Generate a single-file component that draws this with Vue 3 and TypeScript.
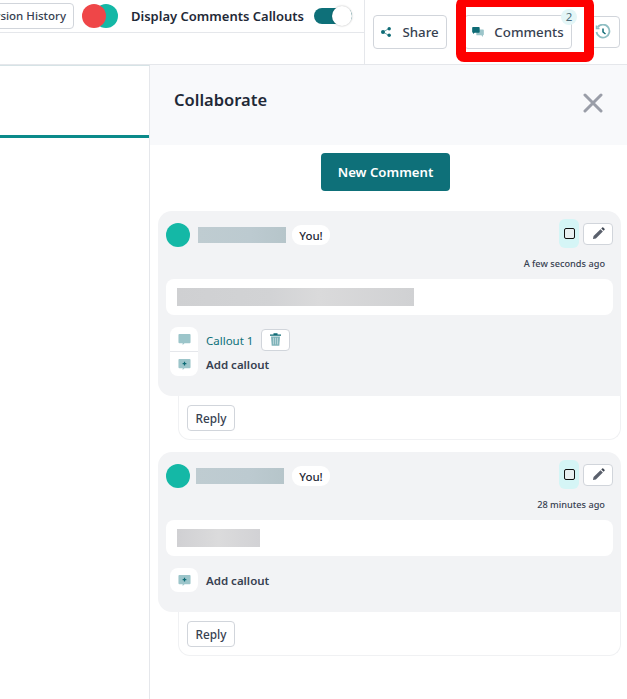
<script setup lang="ts">
interface CommentItem {
  id: number
  nameWidth: number
  nameGap: number
  youGap: number
  time: string
  textWidth: number
  textGradient: string
  callouts: string[]
}

const comments: CommentItem[] = [
  {
    id: 1,
    nameWidth: 88,
    nameGap: 8,
    youGap: 6,
    time: 'A few seconds ago',
    textWidth: 237,
    textGradient: 'linear-gradient(90deg,#cfd0d2,#d2d3d5 40%,#dadadb 60%,#d0d1d3)',
    callouts: ['Callout 1'],
  },
  {
    id: 2,
    nameWidth: 88,
    nameGap: 6,
    youGap: 8,
    time: '28 minutes ago',
    textWidth: 83,
    textGradient: 'linear-gradient(90deg,#d0d0d3,#dbdbdc 50%,#d2d2d5)',
    callouts: [],
  },
]
</script>

<template>
  <div class="page">
    <header class="topbar">
      <div class="top-left">
        <div class="top-row">
          <button class="btn version">Version History</button>
          <div class="avatars">
            <span class="dot teal"></span>
            <span class="dot red"></span>
          </div>
          <span class="toggle-label">Display Comments Callouts</span>
          <span class="toggle"><span class="knob"></span></span>
        </div>
      </div>
      <div class="top-right">
        <button class="btn action share">
          <svg width="10" height="10" viewBox="0 0 10 10">
            <path d="M2 5 8 1.500M2 5l6 3.500" stroke="#0e6b75" stroke-width=".6" />
            <circle cx="2" cy="5" r="2" fill="#0e6b75" />
            <circle cx="8.200" cy="1.700" r="1.700" fill="#0e6b75" />
            <circle cx="8.200" cy="8.300" r="1.700" fill="#0e6b75" />
          </svg>
          Share
        </button>
        <button class="btn action comments">
          <svg width="12" height="10" viewBox="0 0 14 12">
            <path d="M5 3h8a1 1 0 0 1 1 1v5a1 1 0 0 1-1 1v2l-2-2H5z" fill="#9cc5ca" />
            <path d="M1 0h7a1 1 0 0 1 1 1v5a1 1 0 0 1-1 1H3L1 8.500V7a1 1 0 0 1-1-1V1a1 1 0 0 1 1-1z" fill="#0e6b75" />
          </svg>
          Comments
          <span class="badge">2</span>
        </button>
        <button class="btn history">
          <svg width="16" height="16" viewBox="0 0 16 16" fill="none" stroke="#8fbec3" stroke-width="1.800">
            <path d="M2.500 3.500A6.500 6.500 0 1 1 1.500 8" />
            <path d="M1.500 1.500v3h3" stroke-width="1.500" />
            <path d="M8 4.500V8l2.500 2" stroke="#0e6b75" stroke-width="1.500" />
          </svg>
        </button>
        <div class="highlight"></div>
      </div>
    </header>

    <div class="main">
      <aside class="left-pane"><div class="tab-line"></div></aside>
      <section class="panel">
        <div class="panel-head">
          <h2>Collaborate</h2>
          <svg class="close" width="20" height="20" viewBox="0 0 20 20">
            <path d="M2 2 18 18M18 2 2 18" stroke="#9a9ea8" stroke-width="3" stroke-linecap="round" />
          </svg>
        </div>
        <div class="new-wrap"><button class="new-btn">New Comment</button></div>

        <article v-for="c in comments" :key="c.id" class="thread">
          <div class="card">
            <div class="card-head">
              <span class="avatar"></span>
              <span class="name-blur" :style="{ width: c.nameWidth + 'px', marginLeft: c.nameGap + 'px' }"></span>
              <span class="you" :style="{ marginLeft: c.youGap + 'px' }">You!</span>
              <span class="spacer"></span>
              <span class="check-chip"><span class="check"></span></span>
              <button class="btn pencil">
                <svg width="13" height="13" viewBox="0 0 14 14">
                  <path d="M1 13l.7-3.200L9.200 2.300l2.500 2.500L4.200 12.300z" fill="#5a606c" />
                  <path d="M10 1.500l1-1a.8.800 0 0 1 1.100 0l1.400 1.400a.8.800 0 0 1 0 1.100l-1 1z" fill="#3f4652" />
                </svg>
              </button>
            </div>
            <div class="time">{{ c.time }}</div>
            <div class="body-box">
              <span class="text-blur" :style="{ width: c.textWidth + 'px', background: c.textGradient }"></span>
            </div>
            <div class="callouts">
              <div v-for="label in c.callouts" :key="label" class="callout-row">
                <span class="callout-icon divided">
                  <svg width="13" height="13" viewBox="0 0 14 14">
                    <path d="M1.500 1h11a1 1 0 0 1 1 1v8a1 1 0 0 1-1 1H7l-2 2v-2H1.500a1 1 0 0 1-1-1V2a1 1 0 0 1 1-1z" fill="#9cc5ca" />
                  </svg>
                </span>
                <span class="callout-link">{{ label }}</span>
                <button class="btn trash">
                  <svg width="11" height="13" viewBox="0 0 11 13">
                    <path d="M0 1.500h11v1.200H0zM3.500.200h4v1.500h-4z" fill="#0e6b75" />
                    <path d="M1 3.400h9l-.7 9.400H1.700z" fill="#7fb3b9" />
                    <path d="M3.500 4.800v6.600M5.500 4.800v6.600M7.500 4.800v6.600" stroke="#d9e9eb" stroke-width=".6" />
                  </svg>
                </button>
              </div>
              <div class="callout-row">
                <span class="callout-icon">
                  <svg width="13" height="13" viewBox="0 0 14 14">
                    <path d="M1.500 1h11a1 1 0 0 1 1 1v8a1 1 0 0 1-1 1H7l-2 2v-2H1.500a1 1 0 0 1-1-1V2a1 1 0 0 1 1-1z" fill="#9cc5ca" />
                    <path d="M5 6h4M7 4v4" stroke="#0e6b75" stroke-width="1.300" />
                  </svg>
                </span>
                <span class="callout-add">Add callout</span>
              </div>
            </div>
          </div>
          <div class="reply-box"><button class="btn reply">Reply</button></div>
        </article>
      </section>
    </div>
  </div>
</template>

<style>
html, body { margin: 0; background: #fff; }
</style>

<style scoped>
* { box-sizing: border-box; }
.page {
  width: 627px;
  height: 699px;
  overflow: hidden;
  font-family: "Noto Sans", "Open Sans", sans-serif;
  color: #1f2937;
  display: flex;
  flex-direction: column;
}
.btn {
  font-family: inherit;
  background: #fff;
  border: 1px solid #d1d5db;
  border-radius: 4px;
  padding: 0;
  color: #374151;
  display: inline-flex;
  align-items: center;
  justify-content: center;
}
.topbar {
  height: 65px;
  flex: none;
  display: flex;
  border-bottom: 1px solid #e5e7eb;
}
.top-left {
  width: 365px;
  flex: none;
  border-right: 1px solid #e5e7eb;
}
.top-row {
  height: 33px;
  border-bottom: 1px solid #e5e7eb;
  display: flex;
  align-items: center;
  padding-bottom: 1px;
}
.version {
  flex: none;
  width: 110px;
  height: 26px;
  margin-left: -36px;
  padding-right: 7px;
  justify-content: flex-end;
  font-size: 11.500px;
  font-weight: 500;
  white-space: nowrap;
}
.avatars {
  flex: none;
  display: flex;
  margin-left: 8px;
  width: 36px;
}
.dot {
  width: 24px;
  height: 24px;
  border-radius: 50%;
  flex: none;
}
.dot.red {
  background: #ef4648;
  margin-left: -36px;
}
.dot.teal {
  background: #14b8a6;
  margin-left: 12px;
}
.toggle-label {
  flex: none;
  width: 173px;
  margin-left: 13px;
  font-size: 13px;
  font-weight: 600;
  white-space: nowrap;
  color: #1f2937;
}
.toggle {
  flex: none;
  position: relative;
  width: 38px;
  height: 16px;
  margin-left: 10px;
  background: #0e7079;
  border-radius: 8px;
}
.knob {
  position: absolute;
  right: 0;
  top: -2px;
  width: 20px;
  height: 20px;
  border-radius: 50%;
  background: #fff;
  box-shadow: 0 0 2px rgba(0, 0, 0, .3);
}
.top-right {
  flex: 1;
  position: relative;
  display: flex;
  align-items: center;
  padding: 0 6px 0 8px;
}
.action {
  height: 34px;
  font-size: 13.300px;
  font-weight: 500;
  gap: 11px;
  position: relative;
}
.share { width: 74px; }
.comments {
  width: 108px;
  margin-left: 17px;
  gap: 10px;
}
.badge {
  position: absolute;
  right: -6px;
  top: -7px;
  width: 16px;
  height: 16px;
  border-radius: 50%;
  background: #e4f6f7;
  color: #4b6a78;
  font-size: 11.500px;
  font-weight: 400;
  line-height: 16px;
  text-align: center;
}
.history {
  width: 36px;
  height: 32px;
  margin-left: 12px;
  justify-content: flex-end;
  padding-right: 8px;
}
.highlight {
  position: absolute;
  left: 91px;
  top: -3px;
  width: 138px;
  height: 65px;
  border: 10px solid #fe0000;
  border-radius: 8px;
  pointer-events: none;
}
.main {
  flex: 1;
  display: flex;
  min-height: 0;
}
.left-pane {
  width: 150px;
  flex: none;
  border-right: 1px solid #e5e7eb;
  border-top: 1px solid #d6e3e6;
}
.tab-line {
  height: 3px;
  margin-top: 69px;
  background: #0b8a8a;
}
.panel {
  flex: 1;
  min-width: 0;
}
.panel-head {
  height: 80px;
  background: #f8f9fb;
  display: flex;
  align-items: center;
  justify-content: space-between;
  padding: 0 24px 12px 24px;
}
.panel-head h2 {
  margin: 0;
  font-size: 16.500px;
  font-weight: 600;
  color: #1f2937;
}
.close { margin-top: 8px; }
.new-wrap {
  display: flex;
  justify-content: center;
  padding-top: 8px;
  padding-right: 6px;
}
.new-btn {
  width: 129px;
  height: 38px;
  background: #0e7079;
  border: 0;
  border-radius: 4px;
  color: #fff;
  font-family: inherit;
  font-size: 13.200px;
  font-weight: 600;
}
.thread {
  margin: 0 6px 12px 8px;
}
.new-wrap + .thread {
  margin-top: 20px;
}
.card {
  background: #f2f3f5;
  border-radius: 14px 14px 0 14px;
  padding: 8px 8px 20px;
}
.card-head {
  height: 29px;
  display: flex;
  align-items: center;
}
.avatar {
  flex: none;
  width: 24px;
  height: 24px;
  margin-top: 3px;
  border-radius: 50%;
  background: #14b8a6;
}
.name-blur {
  flex: none;
  height: 16px;
  margin-top: 3px;
  background: linear-gradient(90deg, #bfccd1, #bccad0 60%, #b6c5ca);
}
.you {
  flex: none;
  margin-top: 3px;
  width: 38px;
  height: 20px;
  border-radius: 9px;
  background: #fff;
  font-size: 11.500px;
  font-weight: 500;
  line-height: 21px;
  text-align: center;
}
.spacer { flex: 1; }
.check-chip {
  flex: none;
  width: 20px;
  height: 29px;
  border-radius: 6px;
  background: #d5f5f6;
  display: flex;
  align-items: center;
  justify-content: center;
}
.check {
  width: 11px;
  height: 11px;
  border: 1.500px solid #111;
  border-radius: 2px;
  background: #e9f0f1;
}
.pencil {
  flex: none;
  width: 30px;
  height: 22px;
  margin-left: 4px;
}
.time {
  height: 31px;
  padding-right: 8px;
  padding-top: 9px;
  text-align: right;
  font-size: 9.200px;
  font-weight: 500;
  line-height: 14px;
  color: #374151;
}
.body-box {
  height: 36px;
  padding: 9px 11px;
  background: #fff;
  border-radius: 8px;
  display: flex;
}
.text-blur {
  display: block;
  height: 18px;
}
.callouts { margin: 12px 0 0 4px; }
.callout-row {
  height: 24px;
  display: flex;
  align-items: center;
  font-size: 11.500px;
}
.callout-row:has(.trash) { height: 25px; }
.callout-icon {
  width: 28px;
  height: 100%;
  flex: none;
  background: #fff;
  border-radius: 8px;
  display: flex;
  align-items: center;
  justify-content: center;
}
.callout-row:has(.trash) .callout-icon {
  border-radius: 8px 8px 0 0;
  border-bottom: 1px solid #e5e7eb;
}
.callout-row:has(.trash) + .callout-row .callout-icon {
  border-radius: 0 0 8px 8px;
}
.callout-link {
  margin-left: 8px;
  padding-top: 2px;
  color: #0e7079;
  font-weight: 400;
}
.callout-add {
  margin-left: 8px;
  font-weight: 600;
  color: #374151;
}
.trash {
  width: 29px;
  height: 22px;
  margin-left: 8px;
}
.reply-box {
  height: 44px;
  margin-left: 20px;
  padding: 9px 8px;
  background: #fff;
  border: 1px solid #f0f1f3;
  border-top: 0;
  border-radius: 0 0 12px 12px;
}
.reply {
  width: 48px;
  height: 26px;
  font-size: 11.800px;
  font-weight: 500;
}
</style>
